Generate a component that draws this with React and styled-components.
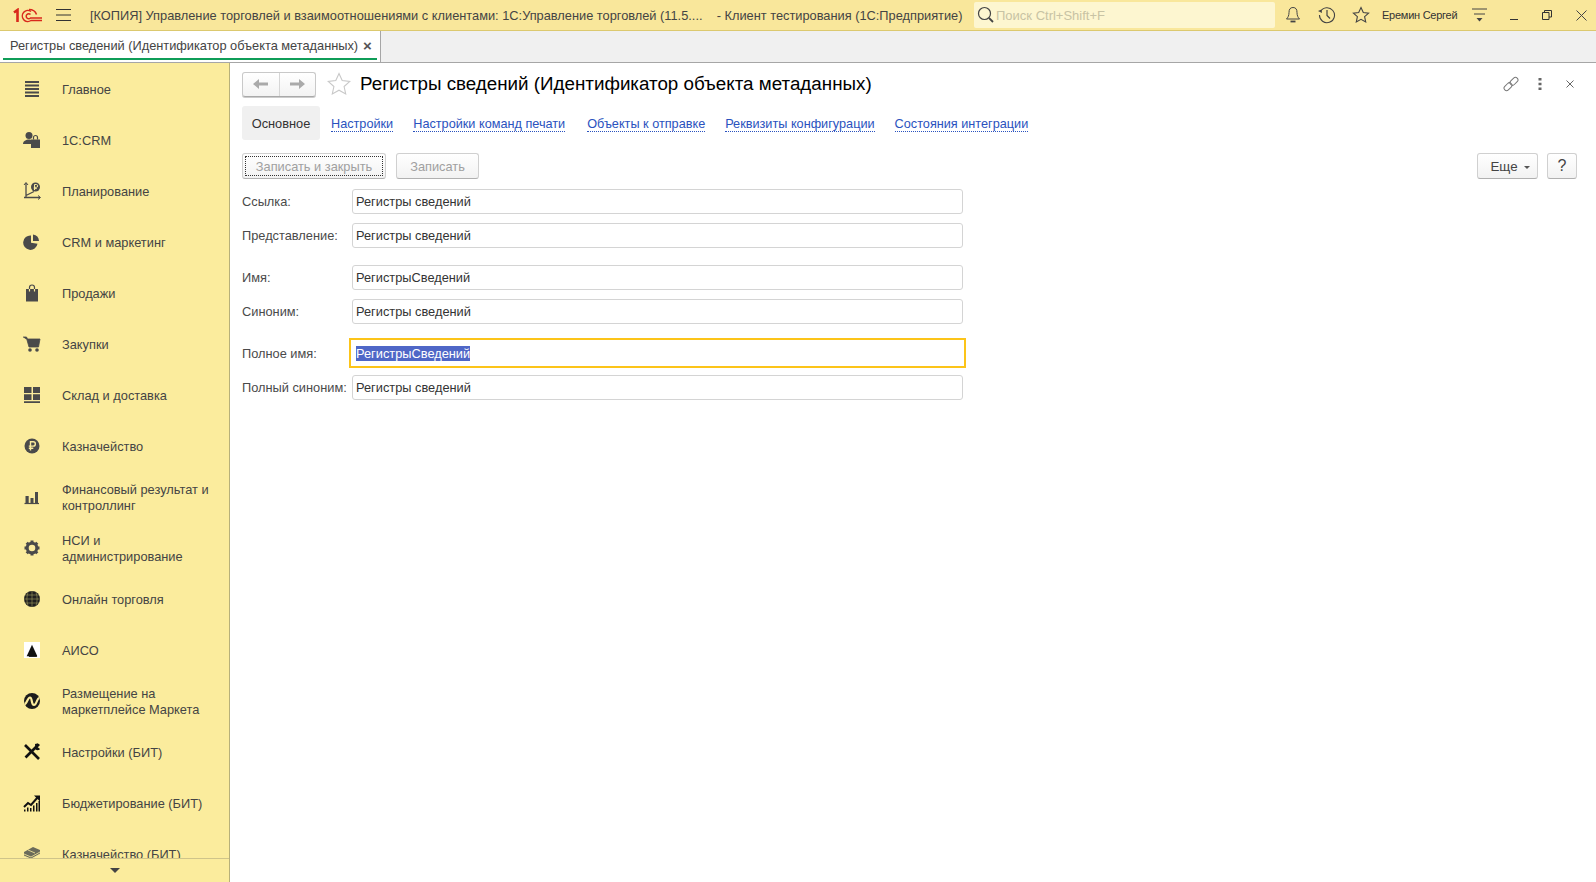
import React from "react";
import styled, { createGlobalStyle } from "styled-components";

const Global = createGlobalStyle`
  html, body { margin: 0; padding: 0; height: 100%; overflow: hidden; background: #fff; }
  #root { height: 882px; width: 1596px; }
  * { box-sizing: border-box; }
  body { font-family: "Liberation Sans", Arial, sans-serif; font-size: 12.8px; color: #3f3f3f; }
`;

const Page = styled.div`display: flex; flex-direction: column; height: 882px; width: 1596px; overflow: hidden;`;

const TopBar = styled.header`
  flex: none; height: 31px; display: flex; align-items: center;
  background: #f9e79b; border-bottom: 1px solid #dcc96f; position: relative;
`;
const LogoSlot = styled.div`flex: none; width: 42px; padding: 2px 0 0 13px; height: 30px; display: flex; align-items: center;`;
const MenuBtn = styled.div`flex: none; width: 48px; height: 30px; display: flex; align-items: center; padding-left: 14px;`;
const AppTitle = styled.div`
  flex: none; width: 884px; white-space: pre; color: #444; overflow: hidden;
`;
const Search = styled.div`
  flex: none; width: 301px; height: 26px; background: #fdf6d0; border-radius: 2px;
  display: flex; align-items: center; padding-left: 3px; gap: 2px; font-size: 13px; color: #c8c3a4;
`;
const TopIcon = styled.div`
  flex: none; width: ${p => p.$w || 34}px; height: 30px; display: flex; align-items: center; justify-content: center;
`;
const IconGroup = styled.div`flex: none; display: flex; align-items: center; margin-left: 1px;`;
const UserName = styled.div`flex: none; font-size: 11px; letter-spacing: -0.25px; color: #333; width: 76px; margin-left: 4px; white-space: nowrap;`;

const TabStrip = styled.div`
  flex: none; height: 32px; background: #f0f0f0; border-bottom: 1px solid #a6a6a6; display: flex;
`;
const Tab = styled.div`
  flex: none; width: 381px; height: 31px; background: #fff; border-right: 1px solid #a6a6a6;
  display: flex; align-items: center; padding: 0 3px 3px 10px; gap: 5px; position: relative; color: #444; white-space: nowrap;
  letter-spacing: -0.01px;
  &::after { content: ""; position: absolute; left: 3px; width: 374px; bottom: 2px; height: 2px; background: #0f9d58; }
`;
const TabClose = styled.span`font-size: 15px; font-weight: 700; color: #555; line-height: 1;`;

const Body = styled.div`flex: 1; display: flex; min-height: 0;`;

const Sidebar = styled.nav`
  flex: none; width: 230px; background: #fbec9d; border-right: 1px solid #b7b07a; display: flex; flex-direction: column; min-height: 0;
`;
const SideList = styled.div`flex: 1; min-height: 0; overflow: hidden;`;
const SideItem = styled.div`height: 51px; display: flex; align-items: center; padding-left: 23px;`;
const SideIcon = styled.div`flex: none; width: 18px; height: 18px; display: flex; align-items: center; justify-content: center; color: #4a4a4a;`;
const SideText = styled.div`margin-left: 21px; padding-top: 2px; line-height: 16px; color: #444; width: 160px;`;
const SideFoot = styled.div`
  flex: none; height: 24px; border-top: 1px solid #cfc48a; display: flex; justify-content: center; align-items: center; padding-bottom: 1px;
`;
const Caret = styled.div`width: 0; height: 0; border-left: 5px solid transparent; border-right: 5px solid transparent; border-top: 5px solid #444;`;

const Main = styled.main`flex: 1; min-width: 0; padding: 8px 19px 0 12px; display: flex; flex-direction: column;`;
const TitleRow = styled.div`height: 26px; display: flex; align-items: center;`;
const NavGroup = styled.div`
  flex: none; width: 74px; height: 25px; display: flex; border: 1px solid #c9c9c9; border-bottom-color: #a9a9a9; border-radius: 3px;
  background: linear-gradient(#fff, #f3f3f3); box-shadow: 0 1px 0 #ccc;
`;
const NavCell = styled.div`flex: 1; display: flex; align-items: center; justify-content: center; & + & { border-left: 1px solid #d6d6d6; }`;
const StarSlot = styled.div`flex: none; margin-left: 11px; width: 24px; height: 24px; display: flex; align-items: center; justify-content: center;`;
const Title = styled.h1`margin: 0 0 0 9px; font-size: 18.8px; font-weight: 400; color: #000; white-space: nowrap; flex: 1;`;
const FormTools = styled.div`flex: none; display: flex; align-items: center; margin-right: -7px;`;
const ToolSlot = styled.div`flex: none; width: ${p => p.$w || 29}px; height: 20px; display: flex; align-items: center; justify-content: center;`;

const LinkRow = styled.div`display: flex; align-items: center; height: 34px; margin-top: 9px;`;
const ActiveLink = styled.div`
  flex: none; width: 78px; height: 34px; background: #f0f0f0; border-radius: 3px; display: flex; align-items: center; justify-content: center; color: #333;
`;
const FormLink = styled.a`
  flex: none; margin-left: ${p => p.$ml}px; margin-top: 2px; color: #2a52be; border-bottom: 1px dotted #2a52be; line-height: 14px; white-space: nowrap;
  font-size: 12.7px;
`;

const CommandRow = styled.div`display: flex; align-items: center; height: 26px; margin-top: 13px;`;
const Cmd = styled.div`
  flex: none; width: ${p => p.$w}px; height: 26px; margin-left: ${p => p.$ml || 0}px; padding-left: ${p => p.$pl || 0}px;
  display: flex; align-items: center; justify-content: center;
  border: 1px solid #d0d0d0; border-bottom-color: #b0b0b0; border-radius: 3px; background: linear-gradient(#fff, #f2f2f2);
  color: ${p => (p.$dim ? "#a0a0a0" : "#444")}; font-size: ${p => p.$fs || 12.8}px; position: relative; gap: 6px;
  ${p => p.$focus && `&::after { content: ""; position: absolute; inset: 2px; border: 1px dotted #333; }`}
`;
const Spacer = styled.div`flex: 1;`;
const SmallCaret = styled.div`width: 0; height: 0; border-left: 3px solid transparent; border-right: 3px solid transparent; border-top: 3px solid #555; margin-top: 2px;`;

const Row = styled.div`display: flex; align-items: center; height: ${p => p.$h || 25}px; margin-top: ${p => p.$mt}px;`;
const Label = styled.div`flex: none; width: 110px; color: #4a4a4a; white-space: nowrap;`;
const Field = styled.div`
  flex: none; width: 611px; height: 25px; border: 1px solid #d4d4d4; border-radius: 3px; padding-left: 3px;
  display: flex; align-items: center; color: #333; background: #fff;
`;
const FocusField = styled.div`
  flex: none; width: 617px; height: 30px; margin-left: -3px; border: 2px solid #fcc419; padding-left: 5px; display: flex; align-items: center;
`;
const Selected = styled.span`background: #4f67c7; color: #fff; line-height: 15px;`;

const Svg = ({ s = 18, vb = "0 0 18 18", children, ...r }) => (
  <svg width={s} height={s} viewBox={vb} fill="none" {...r}>{children}</svg>
);
const D = "#4a4a4a";

const icons = {
  main: <Svg><path d="M2 2h14M2 5.500h14M2 9h14M2 12.500h14M2 16h14" stroke={D} strokeWidth="2" /></Svg>,
  crm: <Svg><circle cx="6" cy="4.500" r="3.500" fill={D} /><path d="M0 13c0-3 3-4.500 6-4.500 1 0 1.500.2 2 .4V13z" fill={D} /><path d="M8 8.500h9v8.500H8z" fill={D} /><path d="M10.500 8.500V6.500a2 2 0 0 1 4 0v2" stroke={D} strokeWidth="1.200" /></Svg>,
  plan: <Svg><path d="M3 1v15M1 15.500h16M3 13.500l8-4" stroke={D} strokeWidth="1.300" /><path d="M1 3l2-2.500L5 3M15 13.500l2.500 2-2.500 2" stroke={D} strokeWidth="1" /><circle cx="12.500" cy="5" r="4.500" fill={D} /><path d="M11.500 8V2.500h1.800a1.300 1.300 0 0 1 0 2.800h-2.500M10.800 6.600h3" stroke="#fbec9d" strokeWidth="1" /></Svg>,
  pie: <Svg><path d="M8 2.500V9.800l6.500 1A7.200 7.200 0 1 1 8 2.500z" fill={D} /><path d="M10 1.500a7 7 0 0 1 6 6.500l-6 0z" fill={D} /></Svg>,
  bag: <Svg><path d="M3 5h12v12.500H3z" fill={D} /><path d="M6.500 8V3.500a2.500 2.500 0 0 1 5 0V8" stroke={D} strokeWidth="1.200" /><path d="M6.500 5v2.500M11.500 5v2.500" stroke="#fbec9d" strokeWidth="1.200" /></Svg>,
  cart: <Svg><path d="M0 2h3.500l1 2H17l-1.500 8H6L4 5" fill={D} stroke={D} strokeWidth=".8" /><circle cx="7" cy="15" r="1.800" fill={D} /><circle cx="14" cy="15" r="1.800" fill={D} /></Svg>,
  stock: <Svg><path d="M1 1h7.500v6H1zM10 1h7v6h-7zM1 8.300h7.500V14H1zM10 8.300h7V14h-7zM1 15.200h16V17H1z" fill={D} /></Svg>,
  ruble: <Svg><circle cx="9" cy="9" r="7.500" fill={D} /><path d="M7.500 13.500V4.800h2.700a2.100 2.100 0 0 1 0 4.300H5.800M5.800 11.200h4.500" stroke="#fbec9d" strokeWidth="1.400" /></Svg>,
  fin: <Svg><path d="M1.500 15.500h14.500" stroke={D} strokeWidth="1.200" /><path d="M2.500 8h3.200v7H2.500zM7.500 10h3v5h-3zM12 4h3v11h-3z" fill={D} /></Svg>,
  gear: <Svg><circle cx="9" cy="9" r="4.800" stroke={D} strokeWidth="3" /><path d="M9 1.500v3M9 13.500v3M1.500 9h3M13.500 9h3M3.700 3.700l2.100 2.100M12.200 12.200l2.100 2.100M3.700 14.300l2.100-2.100M12.200 5.800l2.100-2.100" stroke={D} strokeWidth="3" /></Svg>,
  globe: <Svg><circle cx="9" cy="9" r="8" fill="#1f1f1f" /><path d="M1 9h16M2 5h14M2 13h14M9 1v16M5 2.500c-1.500 4-1.500 9 0 13M13 2.500c1.500 4 1.500 9 0 13" stroke="#a09a60" strokeWidth=".6" /></Svg>,
  aiso: <Svg s={16}><path d="M0 0h18v18H0z" fill="#fff" /><path d="M9 3l6 13H3z" fill="#111" /><path d="M5.500 16h9" stroke="#111" strokeWidth="1.500" /></Svg>,
  market: <Svg><circle cx="9" cy="9" r="8" fill="#1c1c1c" /><path d="M1.500 12C4 12 4.500 5.500 7 5.500S8 13 11 13s2.500-7 5.500-7" stroke="#fbec9d" strokeWidth="2.200" /></Svg>,
  tools: <Svg><path d="M2 2l14 14" stroke="#111" strokeWidth="2.600" /><path d="M15.500 1.500l-13 13" stroke="#111" strokeWidth="2.600" /><path d="M12 1c2-1 4-.5 5 1l-2.500 2L17 6c-1 1.500-3 1.500-4.500.5z" fill="#111" /></Svg>,
  budget: <Svg><path d="M1 13l4-4 3 2 7-8" stroke="#111" strokeWidth="2" /><path d="M11 1.500h6v6z" fill="#111" /><path d="M1 15.500h1.500v2H1zM4 13.500h1.500v4H4zM7 14h1.500v3.500H7zM10 11.500h1.500v6H10zM13 9h1.500v8.500H13zM15.500 7H17v10.500h-1.500z" fill="#111" /></Svg>,
  cash: <Svg><path d="M1 7l9-5 7 3v4l-9 5-7-3z" fill="#6b6b5a" /><path d="M1 9l7 3 9-5M1 11l7 3 9-5M1 13l7 3 9-5M5 5l7 3" stroke="#fbec9d" strokeWidth=".8" /></Svg>,
};

const items = [
  ["main", "Главное"], ["crm", "1С:CRM"], ["plan", "Планирование"], ["pie", "CRM и маркетинг"],
  ["bag", "Продажи"], ["cart", "Закупки"], ["stock", "Склад и доставка"], ["ruble", "Казначейство"],
  ["fin", "Финансовый результат и контроллинг"], ["gear", "НСИ и администрирование"], ["globe", "Онлайн торговля"],
  ["aiso", "АИСО"], ["market", "Размещение на маркетплейсе Маркета"], ["tools", "Настройки (БИТ)"],
  ["budget", "Бюджетирование (БИТ)"], ["cash", "Казначейство (БИТ)"],
];

export default function App() {
  return (
    <Page>
      <Global />
      <TopBar>
        <LogoSlot>
          <svg width="29" height="17" viewBox="0 0 29 17" fill="none">
            <path d="M1 4.500L4.500 2V14" stroke="#d9291c" strokeWidth="2.600" />
            <path d="M18 3.500a5.500 5.500 0 1 0 0 9h11" stroke="#d9291c" strokeWidth="1.500" />
            <path d="M17.500 6.500a2.500 2.500 0 1 0 0 3.500h11.500" stroke="#d9291c" strokeWidth="1.500" />
            <path d="M16 1.500c4 0 6.500 2 7.500 5" stroke="#d9291c" strokeWidth="1.500" />
          </svg>
        </LogoSlot>
        <MenuBtn>
          <svg width="15" height="12" viewBox="0 0 15 12"><path d="M0 .5h15M0 6h15M0 11.500h15" stroke="#333" strokeWidth="1" /></svg>
        </MenuBtn>
        <AppTitle>{"[КОПИЯ] Управление торговлей и взаимоотношениями с клиентами: 1С:Управление торговлей (11.5....    - Клиент тестирования (1С:Предприятие)"}</AppTitle>
        <Search>
          <svg width="17" height="18" viewBox="0 0 17 18" fill="none"><circle cx="7.500" cy="7.500" r="6" stroke="#444" strokeWidth="1.200" /><path d="M12 12l4 4" stroke="#444" strokeWidth="1.800" /></svg>
          Поиск Ctrl+Shift+F
        </Search>
        <IconGroup>
          <TopIcon>
            <svg width="14" height="18" viewBox="0 0 14 18" fill="none"><path d="M7 1.500c-3 0-4 2-4 5 0 3-1 5-2.500 6.500h13C12 11.500 11 9.500 11 6.500c0-3-1-5-4-5z" stroke="#444" strokeWidth="1" /><path d="M4.500 15.500h5" stroke="#444" strokeWidth="1.800" /></svg>
          </TopIcon>
          <TopIcon>
            <svg width="18" height="18" viewBox="0 0 18 18" fill="none"><path d="M2.500 5.500A7.500 7.500 0 1 1 1.500 9" stroke="#444" strokeWidth="1.100" /><path d="M0 5l3.500-1.500L4 7z" fill="#444" /><path d="M9 4v5.500l3 3" stroke="#444" strokeWidth="1.200" /></svg>
          </TopIcon>
          <TopIcon>
            <svg width="18" height="18" viewBox="0 0 18 18" fill="none"><path d="M9 1.500l2.300 5 5.300.6-4 3.600 1.100 5.300L9 13.300 4.300 16l1.100-5.300-4-3.600 5.300-.6z" stroke="#444" strokeWidth="1.100" /></svg>
          </TopIcon>
        </IconGroup>
        <UserName>Еремин Сергей</UserName>
        <TopIcon $w={42}>
          <svg width="15" height="14" viewBox="0 0 15 14"><path d="M0 1h15M2 6h11" stroke="#444" strokeWidth="1" /><path d="M4.500 10h6l-3 3.500z" fill="#444" /></svg>
        </TopIcon>
        <TopIcon $w={28}>
          <svg width="10" height="10" viewBox="0 0 10 10"><path d="M1 9.500h8" stroke="#333" strokeWidth="1" /></svg>
        </TopIcon>
        <TopIcon $w={38}>
          <svg width="10" height="10" viewBox="0 0 10 10" fill="none"><path d="M.5 2.500h6.500v7H.5zM2.500 2.500V.5H9.500v6.500H7" stroke="#333" /></svg>
        </TopIcon>
        <TopIcon $w={30}>
          <svg width="11" height="11" viewBox="0 0 11 11"><path d="M.5.500l10 10M10.500.500l-10 10" stroke="#444" strokeWidth="1" /></svg>
        </TopIcon>
      </TopBar>

      <TabStrip>
        <Tab>Регистры сведений (Идентификатор объекта метаданных)<TabClose>×</TabClose></Tab>
      </TabStrip>

      <Body>
        <Sidebar>
          <SideList>
            {items.map(([k, t]) => (
              <SideItem key={k}>
                <SideIcon>{icons[k]}</SideIcon>
                <SideText>{t}</SideText>
              </SideItem>
            ))}
          </SideList>
          <SideFoot><Caret /></SideFoot>
        </Sidebar>

        <Main>
          <TitleRow>
            <NavGroup>
              <NavCell>
                <svg width="15" height="10" viewBox="0 0 15 10"><path d="M0 5l6-5v3.400h9v3.200H6V10z" fill="#aaa" /></svg>
              </NavCell>
              <NavCell>
                <svg width="15" height="10" viewBox="0 0 15 10"><path d="M15 5L9 0v3.400H0v3.200h9V10z" fill="#aaa" /></svg>
              </NavCell>
            </NavGroup>
            <StarSlot>
              <svg width="24" height="24" viewBox="0 0 24 24" fill="none"><path d="M12 1.500l3.200 7 7.600.9-5.700 5.100 1.600 7.500L12 18.200 5.300 22l1.600-7.500L1.200 9.400l7.600-.9z" stroke="#c8c8c8" strokeWidth="1.100" /></svg>
            </StarSlot>
            <Title>Регистры сведений (Идентификатор объекта метаданных)</Title>
            <FormTools>
              <ToolSlot>
                <svg width="16" height="16" viewBox="0 0 16 16" fill="none" stroke="#777" strokeWidth="1">
                  <rect x="0.500" y="8.200" width="9" height="5" rx="2.500" transform="rotate(-45 5 10.700)" />
                  <rect x="6.500" y="2.800" width="9" height="5" rx="2.500" transform="rotate(-45 11 5.300)" />
                </svg>
              </ToolSlot>
              <ToolSlot $w={30}>
                <svg width="4" height="12" viewBox="0 0 4 12"><path d="M.5 0h3v2.500h-3zM.5 4.700h3v2.500h-3zM.5 9.500h3V12h-3z" fill="#666" /></svg>
              </ToolSlot>
              <ToolSlot>
                <svg width="8" height="8" viewBox="0 0 8 8"><path d="M.5.500l7 7M7.500.500l-7 7" stroke="#666" strokeWidth="1" /></svg>
              </ToolSlot>
            </FormTools>
          </TitleRow>

          <LinkRow>
            <ActiveLink>Основное</ActiveLink>
            <FormLink $ml={11}>Настройки</FormLink>
            <FormLink $ml={20}>Настройки команд печати</FormLink>
            <FormLink $ml={22}>Объекты к отправке</FormLink>
            <FormLink $ml={20}>Реквизиты конфигурации</FormLink>
            <FormLink $ml={20}>Состояния интеграции</FormLink>
          </LinkRow>

          <CommandRow>
            <Cmd $w={144} $dim $focus>Записать и закрыть</Cmd>
            <Cmd $w={83} $ml={10} $dim>Записать</Cmd>
            <Spacer />
            <Cmd $w={61} $fs={13.33} $pl={5}>Еще<SmallCaret /></Cmd>
            <Cmd $w={30} $ml={9} $fs={16}>?</Cmd>
          </CommandRow>

          <Row $mt={10}><Label>Ссылка:</Label><Field>Регистры сведений</Field></Row>
          <Row $mt={9}><Label>Представление:</Label><Field>Регистры сведений</Field></Row>
          <Row $mt={17}><Label>Имя:</Label><Field>РегистрыСведений</Field></Row>
          <Row $mt={9}><Label>Синоним:</Label><Field>Регистры сведений</Field></Row>
          <Row $mt={14} $h={30}><Label>Полное имя:</Label><FocusField><Selected>РегистрыСведений</Selected></FocusField></Row>
          <Row $mt={7}><Label>Полный синоним:</Label><Field>Регистры сведений</Field></Row>
        </Main>
      </Body>
    </Page>
  );
}
